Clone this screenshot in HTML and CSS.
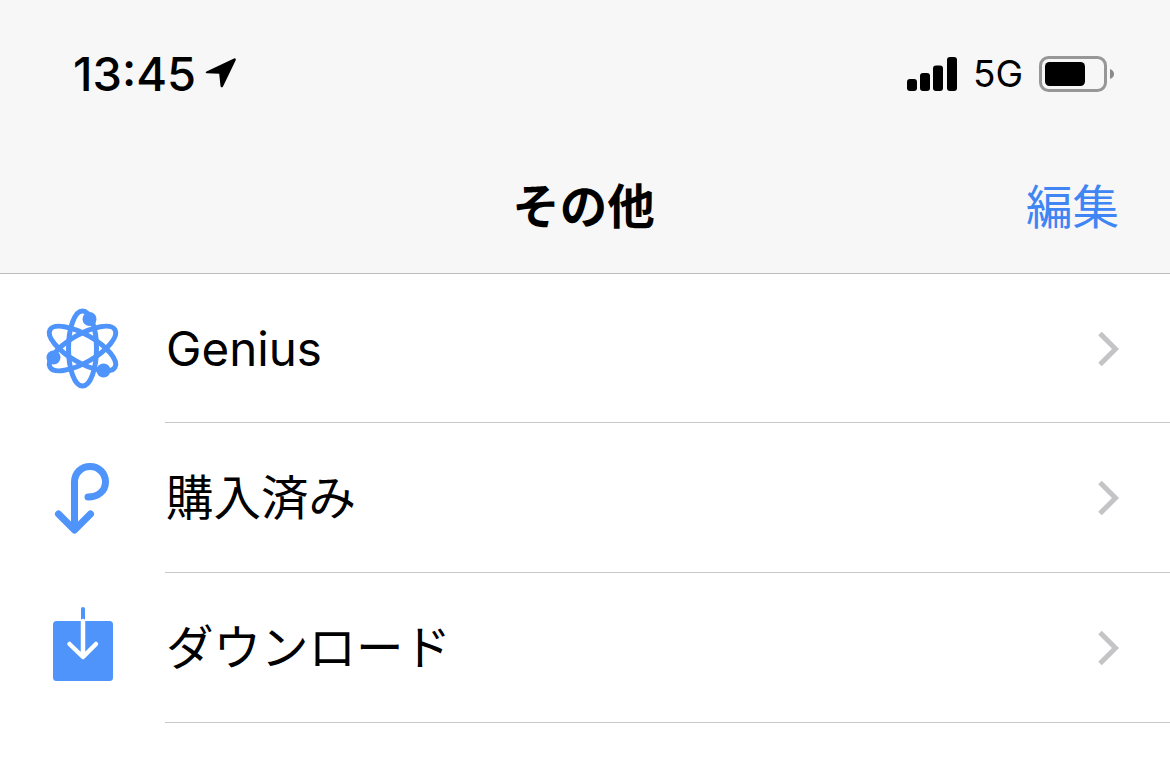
FILE: index.html
```html
<!DOCTYPE html>
<html lang="ja">
<head>
<meta charset="utf-8">
<title>その他</title>
<link rel="stylesheet" href="styles.css">
</head>
<body>
<header class="top">
  <div class="status">
    <div class="status-left">
      <span class="time">13:45</span>
      <svg class="loc" width="34" height="34" viewBox="0 0 34 34"><path d="M2.500 16.500 30 3.500c1.200-.5 2.200.5 1.700 1.700L19 31.500c-.7 1.300-2.300 1-2.500-.4l-1.300-12.300-12.300-.5c-1.400-.1-1.700-1.200-.4-1.800z" fill="#000"/></svg>
    </div>
    <div class="status-right">
      <svg class="signal" width="52" height="36" viewBox="0 0 52 36"><rect x="1" y="23" width="10" height="12" rx="3"/><rect x="14" y="17" width="10" height="18" rx="3"/><rect x="27" y="9.500" width="10" height="25.500" rx="3"/><rect x="41" y="1" width="10" height="34" rx="3"/></svg>
      <span class="net">5G</span>
      <svg class="battery" width="76" height="36" viewBox="0 0 76 36"><rect x="1.500" y="1.500" width="65" height="33" rx="8" fill="none" stroke="#979797" stroke-width="3"/><rect x="6" y="6" width="40" height="24" rx="4.500" fill="#000"/><path d="M71 13c3 1 4 3 4 5s-1 4-4 5z" fill="#8a8a8a"/></svg>
    </div>
  </div>
  <div class="nav">
    <h1 class="title">その他</h1>
    <span class="edit">編集</span>
  </div>
</header>
<ul class="list">
  <li class="row">
    <span class="icon">
      <svg width="80" height="84" viewBox="0 0 80 84" fill="none" stroke="#4f94fb" stroke-width="5">
        <ellipse cx="39.500" cy="41.500" rx="14" ry="37.500"/>
        <ellipse cx="39.500" cy="41.500" rx="14" ry="37.500" transform="rotate(60 39.500 41.500)"/>
        <ellipse cx="39.500" cy="41.500" rx="14" ry="37.500" transform="rotate(-60 39.500 41.500)"/>
        <circle cx="46.500" cy="12" r="7" fill="#4f94fb" stroke="none"/>
        <circle cx="10.500" cy="50.500" r="7" fill="#4f94fb" stroke="none"/>
        <circle cx="60.500" cy="63.500" r="7" fill="#4f94fb" stroke="none"/>
      </svg>
    </span>
    <span class="label">Genius</span>
    <svg class="chev" width="24" height="38" viewBox="0 0 24 38"><path d="M4 3.500 19.500 19 4 34.500" fill="none" stroke="#c4c4c7" stroke-width="5"/></svg>
  </li>
  <li class="row">
    <span class="icon">
      <svg width="80" height="84" viewBox="0 0 80 84" fill="none" stroke="#4f94fb" stroke-width="7" stroke-linecap="round" stroke-linejoin="round">
        <path d="M31.500 72V26c0-9 7-15.500 15.500-15.500S62.500 17 62.500 26 55 41 45 41"/>
        <path d="M15.500 58 31.500 74 47.500 58"/>
      </svg>
    </span>
    <span class="label">購入済み</span>
    <svg class="chev" width="24" height="38" viewBox="0 0 24 38"><path d="M4 3.500 19.500 19 4 34.500" fill="none" stroke="#c4c4c7" stroke-width="5"/></svg>
  </li>
  <li class="row">
    <span class="icon">
      <svg width="80" height="84" viewBox="0 0 80 84">
        <rect x="10" y="15" width="60" height="60" rx="3.500" fill="#4f94fb"/>
        <path d="M40 15V3" stroke="#4f94fb" stroke-width="4" stroke-linecap="round"/>
        <path d="M40 15V50M26.500 38 40 51 53 38" fill="none" stroke="#fff" stroke-width="4.500" stroke-linecap="round" stroke-linejoin="round"/>
      </svg>
    </span>
    <span class="label">ダウンロード</span>
    <svg class="chev" width="24" height="38" viewBox="0 0 24 38"><path d="M4 3.500 19.500 19 4 34.500" fill="none" stroke="#c4c4c7" stroke-width="5"/></svg>
  </li>
</ul>
</body>
</html>
```

FILE: styles.css
```css
html, body {
  margin: 0;
  padding: 0;
  background: #fff;
  overflow: hidden;
}
body {
  width: 1170px;
  height: 780px;
  font-family: "Inter", "Liberation Sans", "Noto Sans CJK JP", sans-serif;
  color: #000;
}
.top {
  height: 274px;
  box-sizing: border-box;
  background: #f7f7f7;
  border-bottom: 1px solid #bcbcbc;
  display: flex;
  flex-direction: column;
}
.status {
  height: 150px;
  padding: 50px 55px 0 73px;
  box-sizing: border-box;
  display: flex;
  justify-content: space-between;
  align-items: flex-start;
}
.status-left {
  display: flex;
  align-items: center;
  gap: 8px;
  height: 48px;
}
.time {
  font-size: 47px;
  font-weight: 500;
  line-height: 48px;
}
.loc { margin-top: -4px; }
.status-right {
  display: flex;
  align-items: center;
  height: 48px;
}
.signal { fill: #000; margin-right: 15px; }
.net {
  font-size: 37px;
  font-weight: 400;
  line-height: 48px;
  margin-right: 16px;
}
.nav {
  flex: 1;
  position: relative;
  display: flex;
  justify-content: center;
  align-items: flex-start;
  padding-top: 25px;
  padding-right: 3px;
  box-sizing: border-box;
}
.title {
  margin: 0;
  font-family: "Noto Sans CJK JP", sans-serif;
  font-size: 47.5px;
  font-weight: 700;
  line-height: 58px;
}
.edit {
  position: absolute;
  right: 51px;
  top: 25px;
  font-family: "Noto Sans CJK JP", sans-serif;
  font-size: 46.5px;
  line-height: 58px;
  font-weight: 400;
  color: #3f86f4;
}
.list {
  list-style: none;
  margin: 0;
  padding: 0;
}
.row {
  height: 150px;
  box-sizing: border-box;
  display: flex;
  align-items: center;
  position: relative;
  padding-right: 50px;
}
.row:first-child { height: 149px; }
.row::after {
  content: "";
  position: absolute;
  left: 165px;
  right: 0;
  bottom: 0;
  height: 1px;
  background: #c8c8c8;
}
.icon {
  width: 165px;
  padding-left: 43px;
  box-sizing: border-box;
  display: flex;
  flex: none;
}
.label {
  flex: 1;
  font-family: "Inter", "Noto Sans CJK JP", sans-serif;
  font-size: 47.5px;
  font-weight: 400;
  line-height: 58px;
  padding-left: 1px;
}
.chev { flex: none; }
```
